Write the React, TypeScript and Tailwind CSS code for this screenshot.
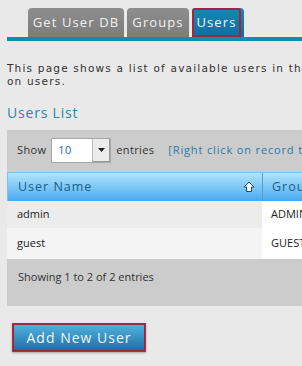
import React from "react";

export default function App() {
  const sans = { fontFamily: '"Open Sans", "DejaVu Sans", sans-serif' };
  return (
    <div className="w-[302px] h-[366px] overflow-hidden bg-[#e9e9e9] text-[#333]" style={sans}>
      {/* Tabs */}
      <div className="flex items-end gap-[3px] pl-[28px] pt-[8px] h-[37px]">
        <div className="h-[29px] w-[96px] shrink-0 flex items-center justify-center rounded-t-[4px] bg-gradient-to-b from-[#8e8e8e] to-[#7c7c7c] text-[#f0f0f0] text-[13px] tracking-[1.1px] whitespace-nowrap">
          Get User DB
        </div>
        <div className="h-[29px] w-[62px] shrink-0 flex items-center justify-center rounded-t-[4px] bg-gradient-to-b from-[#8e8e8e] to-[#7c7c7c] text-[#f0f0f0] text-[13px] tracking-[1.1px]">
          Groups
        </div>
        <div className="h-[29px] w-[52px] shrink-0 pr-[3px] flex rounded-t-[4px] bg-gradient-to-b from-[#1a86b4] to-[#0f6e9c]">
          <div className="flex-1 flex items-center justify-center border-2 border-[#a3263e] rounded-t-[3px] text-[#f0f6fa] text-[13px] tracking-[1.1px]">
            Users
          </div>
        </div>
      </div>
      <div className="ml-[7px] h-[4px] bg-[#0b8fb0]" />

      {/* Description */}
      <div className="mt-[21px] ml-[7px] text-[10.5px] leading-[13px] tracking-[1.2px] text-[#333] whitespace-nowrap" style={{ fontFamily: '"DejaVu Sans", sans-serif' }}>
        <div>This page shows a list of available users in the system.</div>
        <div>on users.</div>
      </div>

      {/* Heading */}
      <div className="mt-[16px] ml-[7px] text-[14px] leading-[18px] tracking-[0.8px] text-[#2a86b0]">
        Users List
      </div>

      {/* Panel */}
      <div className="mt-[8px] ml-[7px] bg-[#cccccc] w-[310px]">
        <div className="h-[40px] flex items-center pl-[10px] text-[11px] tracking-[0.35px] text-[#333] whitespace-nowrap">
          <span className="shrink-0">Show</span>
          <div className="ml-[5px] w-[60px] h-[25px] shrink-0 flex bg-white border border-[#a8a8a8]">
            <span className="flex-1 flex items-center pl-[6px] text-[11px] text-[#2a6a96]">10</span>
            <span className="w-[18px] flex items-center justify-center bg-[#ececec] border-l border-[#bbb] shadow-[inset_-1px_-1px_0_#999]">
              <svg width="7" height="4" viewBox="0 0 7 4"><path d="M0 0h7L3.5 4z" fill="#222" /></svg>
            </span>
          </div>
          <span className="ml-[5px] shrink-0">entries</span>
          <span className="ml-[14px] shrink-0 text-[#2a7aa8] tracking-[0.85px]">[Right click on record to edit]</span>
        </div>

        {/* Table */}
        <div className="mt-[2px]">
          <div className="flex h-[29px] bg-gradient-to-b from-[#aee4fb] to-[#46aaf0] border-l border-t border-[#7cc4ec] text-[#1d5f8a] text-[12.5px] tracking-[1px]">
            <div className="w-[255px] shrink-0 flex items-center pl-[10px] pr-[7px] border-r border-[#5a9ec8]">
              <span className="flex-1">User Name</span>
              <svg width="12" height="12" viewBox="0 0 12 12">
                <path d="M6 1L11 6H8.5V10.5H3.5V6H1Z" fill="#fff" stroke="#1d4f6e" strokeWidth="1" strokeLinejoin="round" />
              </svg>
            </div>
            <div className="flex items-center pl-[9px]">Group</div>
          </div>
          <div className="flex h-[27px] text-[11px] text-[#222]">
            <div className="w-[255px] shrink-0 flex items-center pl-[10px] bg-[#ececec]">admin</div>
            <div className="flex-1 flex items-center pl-[9px] bg-white">ADMIN</div>
          </div>
          <div className="flex h-[31px] text-[11px] text-[#222]">
            <div className="w-[255px] shrink-0 flex items-center pl-[10px] bg-[#f4f4f4]">guest</div>
            <div className="flex-1 flex items-center pl-[9px] bg-white">GUEST</div>
          </div>
        </div>

        <div className="h-[47px] pt-[10px] pl-[11px] text-[11px] text-[#333]">
          Showing 1 to 2 of 2 entries
        </div>
      </div>

      {/* Button */}
      <div className="mt-[17px] ml-[12px]">
        <button className="w-[134px] h-[29px] border border-[#c3253c] p-[1px] bg-[#8a2a3a] shadow-[0_1px_2px_rgba(0,0,0,0.3)]">
          <div className="w-full h-full bg-gradient-to-b from-[#52b0de] to-[#1a72a6] text-[#eef6fb] text-[14px] tracking-[1px] flex items-center justify-center">
            Add New User
          </div>
        </button>
      </div>
    </div>
  );
}
